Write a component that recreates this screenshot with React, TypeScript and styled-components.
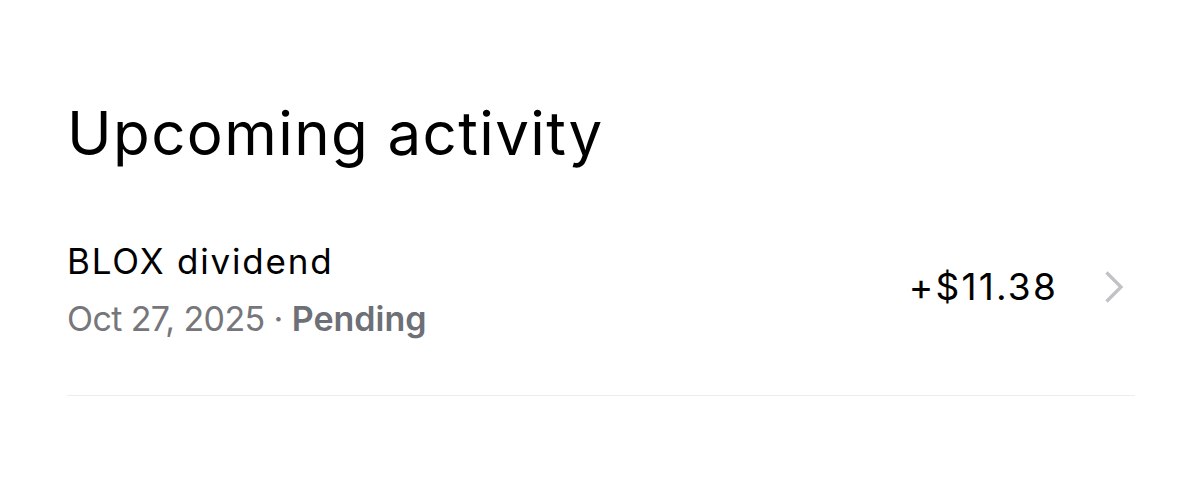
import React from "react";
import styled, { createGlobalStyle } from "styled-components";

const Global = createGlobalStyle`
  html, body { margin: 0; padding: 0; background: #fff; }
  body { font-family: Inter, "Noto Sans", sans-serif; color: #000; }
`;

const Page = styled.div`
  padding: 97px 65px 0 67px;
`;

const Title = styled.h1`
  margin: 0;
  font-size: 60px;
  font-weight: 400;
  line-height: 72px;
  letter-spacing: 1.4px;
`;

const Row = styled.div`
  margin-top: 71px;
  display: flex;
  align-items: center;
  padding-bottom: 55px;
  border-bottom: 1px solid #ececee;
`;

const Info = styled.div`
  flex: 1;
  display: flex;
  flex-direction: column;
  gap: 16px;
`;

const Name = styled.div`
  font-size: 35px;
  line-height: 42px;
  letter-spacing: 1.8px;
`;

const Meta = styled.div`
  font-size: 34px;
  line-height: 42px;
  color: #76767b;
`;

const DateText = styled.span`
  letter-spacing: -0.6px;
`;

const Status = styled.span`
  font-weight: 600;
  color: #6d7076;
`;

const Amount = styled.div`
  font-size: 37px;
  line-height: 42px;
  letter-spacing: 2.2px;
  margin-right: 46px;
  margin-bottom: 7px;
`;

const Chevron = styled.svg`
  width: 20px;
  height: 32px;
  margin-right: 11px;
  margin-bottom: 6px;
`;

export default function App() {
  return (
    <>
      <Global />
      <Page>
        <Title>Upcoming activity</Title>
        <Row>
          <Info>
            <Name>BLOX dividend</Name>
            <Meta>
              <DateText>Oct 27, 2025 · </DateText>
              <Status>Pending</Status>
            </Meta>
          </Info>
          <Amount>+$11.38</Amount>
          <Chevron viewBox="0 0 20 32" fill="none">
            <path d="M2.5 1.5 L17 16 L2.5 30.5" stroke="#c2c2c5" strokeWidth="3.3" />
          </Chevron>
        </Row>
      </Page>
    </>
  );
}
